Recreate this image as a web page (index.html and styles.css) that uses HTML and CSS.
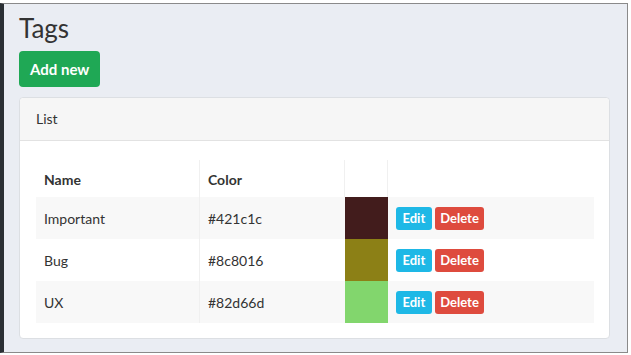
FILE: index.html
```html
<!DOCTYPE html>
<html>
<head>
  <meta charset="utf-8"/>
  <title>Tags</title>
  <link rel="stylesheet" href="styles.css">
</head>
<body>
  <div class="window">
    <h1>Tags</h1>
    <button class="btn btn-success">Add new</button>

    <div class="card">
      <div class="card-header">List</div>
      <div class="card-body">
        <table class="table">
          <thead>
            <tr>
              <th class="col-name">Name</th>
              <th class="col-color">Color</th>
              <th class="col-swatch"></th>
              <th></th>
            </tr>
          </thead>
          <tbody>
            <tr>
              <td>Important</td>
              <td>#421c1c</td>
              <td class="swatch" style="background: #421c1c"></td>
              <td class="actions"><button class="btn-sm btn-info">Edit</button><button class="btn-sm btn-danger">Delete</button></td>
            </tr>
            <tr>
              <td>Bug</td>
              <td>#8c8016</td>
              <td class="swatch" style="background: #8c8016"></td>
              <td class="actions"><button class="btn-sm btn-info">Edit</button><button class="btn-sm btn-danger">Delete</button></td>
            </tr>
            <tr>
              <td>UX</td>
              <td>#82d66d</td>
              <td class="swatch" style="background: #82d66d"></td>
              <td class="actions"><button class="btn-sm btn-info">Edit</button><button class="btn-sm btn-danger">Delete</button></td>
            </tr>
          </tbody>
        </table>
      </div>
    </div>
  </div>
</body>
</html>
```

FILE: styles.css
```css
body {
  margin: 0;
  background: #fff;
  font-family: Lato, "Open Sans", sans-serif;
  color: #333;
}
.window {
  box-sizing: border-box;
  width: 628px;
  height: 350px;
  margin-top: 3px;
  padding: 0 17px 0 15px;
  background: #eaedf3;
  border-left: 4px solid #2b2f34;
  border-top: 1px solid #8a8a8a;
  border-right: 1px solid #8a8a8a;
  border-bottom: 1px solid #8a8a8a;
}
h1 {
  margin: 0;
  padding-top: 8px;
  font-size: 26px;
  font-weight: 400;
  line-height: 32px;
  color: #333;
}
.btn {
  margin-top: 7px;
  height: 36px;
  padding: 0 11px;
  border: none;
  border-radius: 4px;
  font-family: inherit;
  font-size: 15px;
  font-weight: 700;
  color: #fff;
}
.btn-success {
  background: #1fa855;
}
.card {
  margin-top: 10px;
  background: #fff;
  border: 1px solid #dcdfe3;
  border-radius: 4px;
}
.card-header {
  height: 42px;
  line-height: 42px;
  padding: 0 16px;
  background: #f6f6f6;
  border-bottom: 1px solid #e2e2e2;
  border-radius: 4px 4px 0 0;
  font-size: 14px;
}
.card-body {
  padding: 19px 15px 15px 16px;
}
.table {
  width: 558px;
  border-collapse: collapse;
  font-size: 14px;
}
.table th,
.table td {
  height: 42px;
  padding: 0 8px;
  text-align: left;
}
.table th {
  height: 35px;
  vertical-align: middle;
  padding-top: 2px;
  font-weight: 700;
}
.col-name {
  width: 147px;
  border-right: 1px solid #f0f0f0;
}
.col-color {
  width: 128px;
  border-right: 1px solid #f0f0f0;
}
.col-swatch {
  width: 26px;
  border-right: 1px solid #f0f0f0;
}
.table td:first-child {
  border-right: 1px solid #f0f0f0;
}
.table tbody tr:nth-child(odd) {
  background: #f8f8f8;
}
.table td.swatch {
  padding: 0;
}
.actions {
  padding-left: 10px;
}
.btn-sm {
  height: 23px;
  padding: 0 5px;
  margin-right: 3px;
  border: none;
  border-radius: 3px;
  font-family: inherit;
  font-size: 13px;
  font-weight: 700;
  color: #fff;
}
.btn-info {
  padding: 0 7px;
  background: #1eb8e6;
}
.btn-danger {
  background: #de4b3e;
}
```
